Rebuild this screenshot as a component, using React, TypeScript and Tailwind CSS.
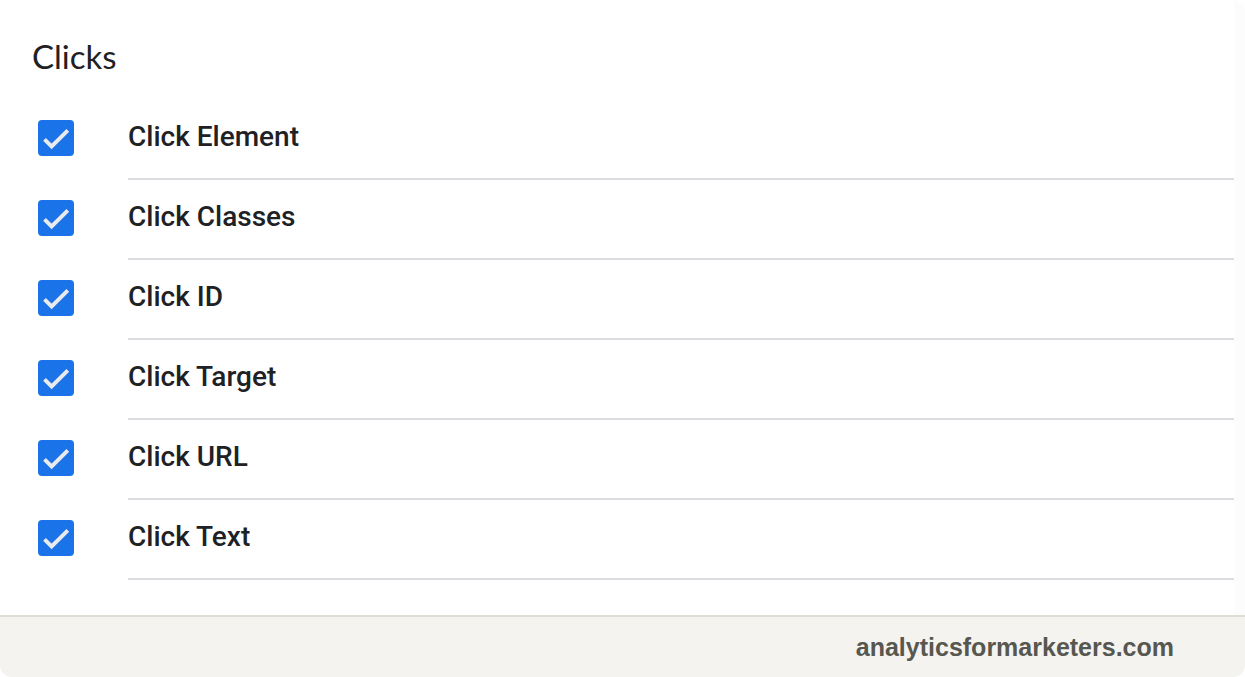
import React, { useState } from 'react';

const VARIABLES = [
  { id: 'click-element', label: 'Click Element' },
  { id: 'click-classes', label: 'Click Classes' },
  { id: 'click-id', label: 'Click ID' },
  { id: 'click-target', label: 'Click Target' },
  { id: 'click-url', label: 'Click URL' },
  { id: 'click-text', label: 'Click Text' },
];

interface VariableRowProps {
  id: string;
  label: string;
  checked: boolean;
  onToggle: (id: string) => void;
}

const VariableRow = ({ id, label, checked, onToggle }: VariableRowProps) => (
  <li className="flex h-20 pl-[38px]">
    <div className="mt-5 mr-[54px] grid size-9 shrink-0">
      <input
        id={id}
        type="checkbox"
        checked={checked}
        onChange={() => onToggle(id)}
        className="col-start-1 row-start-1 size-9 cursor-pointer appearance-none rounded border-4 border-[#5f6368] checked:border-[#1a73e8] checked:bg-[#1a73e8]"
      />
      {checked && (
        <svg
          viewBox="0 0 36 36"
          fill="none"
          aria-hidden="true"
          className="pointer-events-none col-start-1 row-start-1 size-9"
        >
          <path d="M6.5 19.4 13.6 26.5 29.8 10.3" stroke="#e8eaed" strokeWidth="3.9" />
        </svg>
      )}
    </div>
    <label
      htmlFor={id}
      className="flex-1 cursor-pointer border-b-2 border-[#dadce0] pt-[17px] text-[28px] leading-10 font-medium text-[#202124]"
    >
      {label}
    </label>
  </li>
);

export default function App() {
  const [selected, setSelected] = useState<string[]>(VARIABLES.map((v) => v.id));

  const toggle = (id: string) => {
    setSelected((prev) => (prev.includes(id) ? prev.filter((s) => s !== id) : [...prev, id]));
  };

  return (
    <div className="flex min-h-screen flex-col overflow-hidden rounded-xl bg-[#fcfcfc]">
      <main className="mr-[11px] flex-1 bg-white pb-[35px] font-['Roboto',sans-serif]">
        <h2 className="pt-9 pb-6 pl-8 font-['Lato',sans-serif] text-[33px] leading-10 text-[#202124]">
          Clicks
        </h2>
        <ul>
          {VARIABLES.map((v) => (
            <VariableRow
              key={v.id}
              id={v.id}
              label={v.label}
              checked={selected.includes(v.id)}
              onToggle={toggle}
            />
          ))}
        </ul>
      </main>

      <footer className="flex h-[62px] items-center justify-end border-t-2 border-[#deded6] bg-[#f4f3ef] pr-[71px]">
        <a
          href="#"
          className="font-['Liberation_Sans',Arial,sans-serif] text-[25px] leading-8 font-bold text-[#57574f]"
        >
          analyticsformarketers.com
        </a>
      </footer>
    </div>
  );
}
